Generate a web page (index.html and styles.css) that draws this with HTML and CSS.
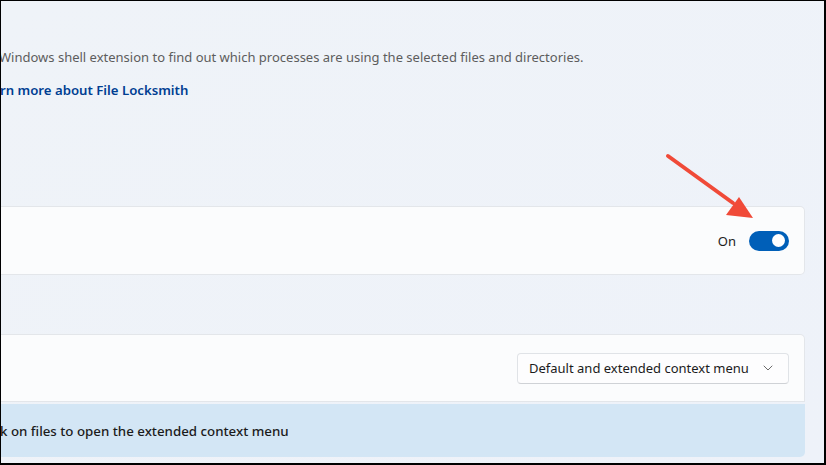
FILE: index.html
```html
<!DOCTYPE html>
<html>
<head>
<meta charset="utf-8">
<link rel="stylesheet" href="styles.css">
</head>
<body>
<div class="frame">
  <div class="content">
    <p class="desc">Windows shell extension to find out which processes are using the selected files and directories.</p>
    <a class="link" href="#">rn more about File Locksmith</a>

    <div class="card card-toggle">
      <div class="card-spacer"></div>
      <div class="toggle-wrap">
        <span class="toggle-label">On</span>
        <span class="toggle"><span class="knob"></span></span>
      </div>
    </div>

    <div class="group">
      <div class="card card-select">
        <div class="card-spacer"></div>
        <div class="select">
          <span>Default and extended context menu</span>
          <svg class="chev" width="10" height="6" viewBox="0 0 10 6"><path d="M1 1 L5 5 L9 1" fill="none" stroke="#6b6b6b" stroke-width="1" stroke-linecap="round" stroke-linejoin="round"/></svg>
        </div>
      </div>
      <div class="info">k on files to open the extended context menu</div>
    </div>
  </div>

  <svg class="arrow" width="826" height="465" viewBox="0 0 826 465">
    <line x1="668" y1="156" x2="733" y2="203" stroke="#f04a38" stroke-width="4" stroke-linecap="round"/>
    <polygon points="753,218 726,215 739,197" fill="#f04a38"/>
  </svg>
</div>
</body>
</html>
```

FILE: styles.css
```css
html, body {
  margin: 0;
  padding: 0;
}

.frame {
  position: relative;
  width: 826px;
  height: 465px;
  box-sizing: border-box;
  border-left: 1px solid #000;
  border-top: 1px solid #000;
  border-right: 2px solid #000;
  border-bottom: 2px solid #000;
  background: linear-gradient(135deg, #eff3f8 0%, #eef2f9 100%);
  overflow: hidden;
  font-family: "Noto Sans", "Open Sans", sans-serif;
}

.content {
  display: flex;
  flex-direction: column;
  margin-right: 19px;
  padding-top: 46px;
}

.desc {
  margin: 0;
  font-size: 13px;
  line-height: 20px;
  color: #5d5d5d;
  margin-left: -2px;
  white-space: nowrap;
}

.link {
  margin-top: 13px;
  font-size: 13.2px;
  line-height: 20px;
  font-weight: 600;
  color: #003e92;
  text-decoration: none;
  margin-left: -1px;
  white-space: nowrap;
}

.card {
  display: flex;
  align-items: center;
  background: #fbfcfd;
  border: 1px solid #e3e6ea;
  border-left: none;
  border-radius: 0 5px 5px 0;
  padding-right: 15px;
  box-sizing: border-box;
}

.card-spacer {
  flex: 1;
}

.card-toggle {
  margin-top: 106px;
  height: 69px;
}

.toggle-wrap {
  display: flex;
  align-items: center;
  gap: 13px;
}

.toggle-label {
  font-size: 13px;
  color: #1b1b1b;
}

.toggle {
  display: flex;
  align-items: center;
  justify-content: flex-end;
  width: 40px;
  height: 20px;
  border-radius: 10px;
  background: #005fb8;
  padding: 0 4px;
  box-sizing: border-box;
}

.knob {
  width: 13px;
  height: 13px;
  border-radius: 50%;
  background: #fff;
}

.group {
  margin-top: 59px;
  display: flex;
  flex-direction: column;
  gap: 2px;
}

.card-select {
  height: 68px;
  border-radius: 0 5px 0 0;
}

.select {
  display: flex;
  align-items: center;
  justify-content: space-between;
  width: 272px;
  height: 31px;
  box-sizing: border-box;
  padding: 0 15px 0 11px;
  background: #fdfdfe;
  border: 1px solid #e0e3e7;
  border-bottom-color: #cfd2d6;
  border-radius: 4px;
  font-size: 13px;
  color: #1b1b1b;
}

.chev {
  display: block;
}

.info {
  height: 53px;
  display: flex;
  align-items: center;
  background: #d3e6f5;
  border-radius: 0 0 5px 0;
  font-size: 13.3px;
  font-weight: 500;
  color: #1b1b1b;
  margin-left: -1px;
  white-space: nowrap;
}

.arrow {
  position: absolute;
  left: -1px;
  top: -1px;
  pointer-events: none;
}
```
